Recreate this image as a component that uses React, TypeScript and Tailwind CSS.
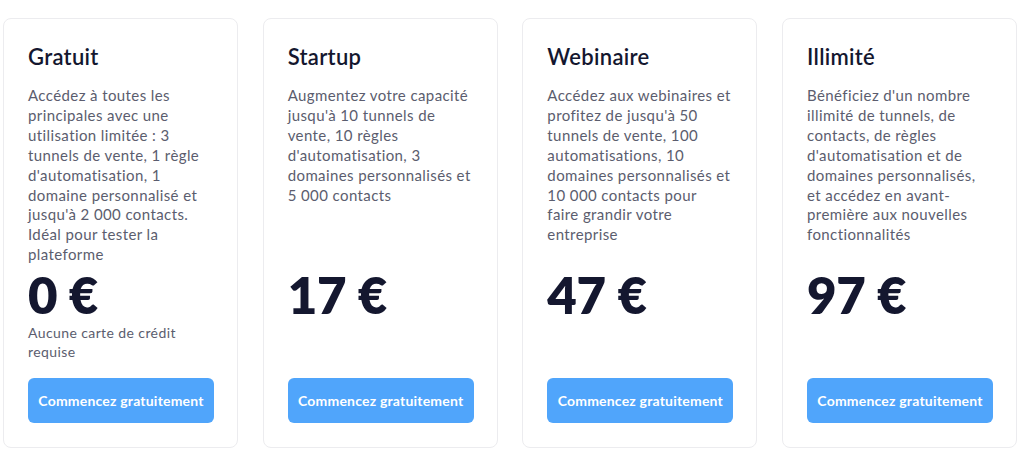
const plans = [
  {
    name: 'Gratuit',
    text: "Accédez à toutes les principales avec une utilisation limitée : 3 tunnels de vente, 1 règle d'automatisation, 1 domaine personnalisé et jusqu'à 2 000 contacts. Idéal pour tester la plateforme",
    price: '0 €',
    note: 'Aucune carte de crédit requise',
  },
  {
    name: 'Startup',
    text: "Augmentez votre capacité jusqu'à 10 tunnels de vente, 10 règles d'automatisation, 3 domaines personnalisés et 5 000 contacts",
    price: '17 €',
  },
  {
    name: 'Webinaire',
    text: "Accédez aux webinaires et profitez de jusqu'à 50 tunnels de vente, 100 automatisations, 10 domaines personnalisés et 10 000 contacts pour faire\u00a0grandir votre entreprise",
    price: '47 €',
  },
  {
    name: 'Illimité',
    text: "Bénéficiez d'un nombre illimité de tunnels, de contacts, de règles d'automatisation et de domaines personnalisés, et accédez en avant-première aux nouvelles fonctionnalités",
    price: '97 €',
  },
];

const App = () => {
  return (
    <div className="w-[1024px] h-[461px] bg-white pt-[18px] pl-[3px] font-['Lato',sans-serif]">
      <div className="grid w-[1014px] grid-cols-4 gap-[24.7px]">
        {plans.map((plan) => (
          <div
            key={plan.name}
            className="h-[430px] flex flex-col rounded-lg border border-[#ececef] bg-white px-6 pt-[24px] pb-6"
          >
            <h3 className="text-[22px] leading-7 font-semibold tracking-[0.3px] text-[#14172f]">{plan.name}</h3>
            <p className="mt-[15px] h-[180px] text-[15px] leading-[19.9px] tracking-[0.4px] text-[#5b5d6e]">
              {plan.text}
            </p>
            <div className="mt-[7px] text-[51px] leading-[44px] font-extrabold tracking-[-0.3px] text-[#14172f]">
              {plan.price}
            </div>
            {plan.note && (
              <p className="mt-[6px] text-[14px] leading-[19px] tracking-[0.4px] text-[#5b5d6e]">{plan.note}</p>
            )}
            <button className="mt-auto h-[45px] w-[186px] rounded-md bg-[#50a5fb] text-[14px] font-bold tracking-[0.2px] text-white">
              Commencez gratuitement
            </button>
          </div>
        ))}
      </div>
    </div>
  );
};

export default App;
